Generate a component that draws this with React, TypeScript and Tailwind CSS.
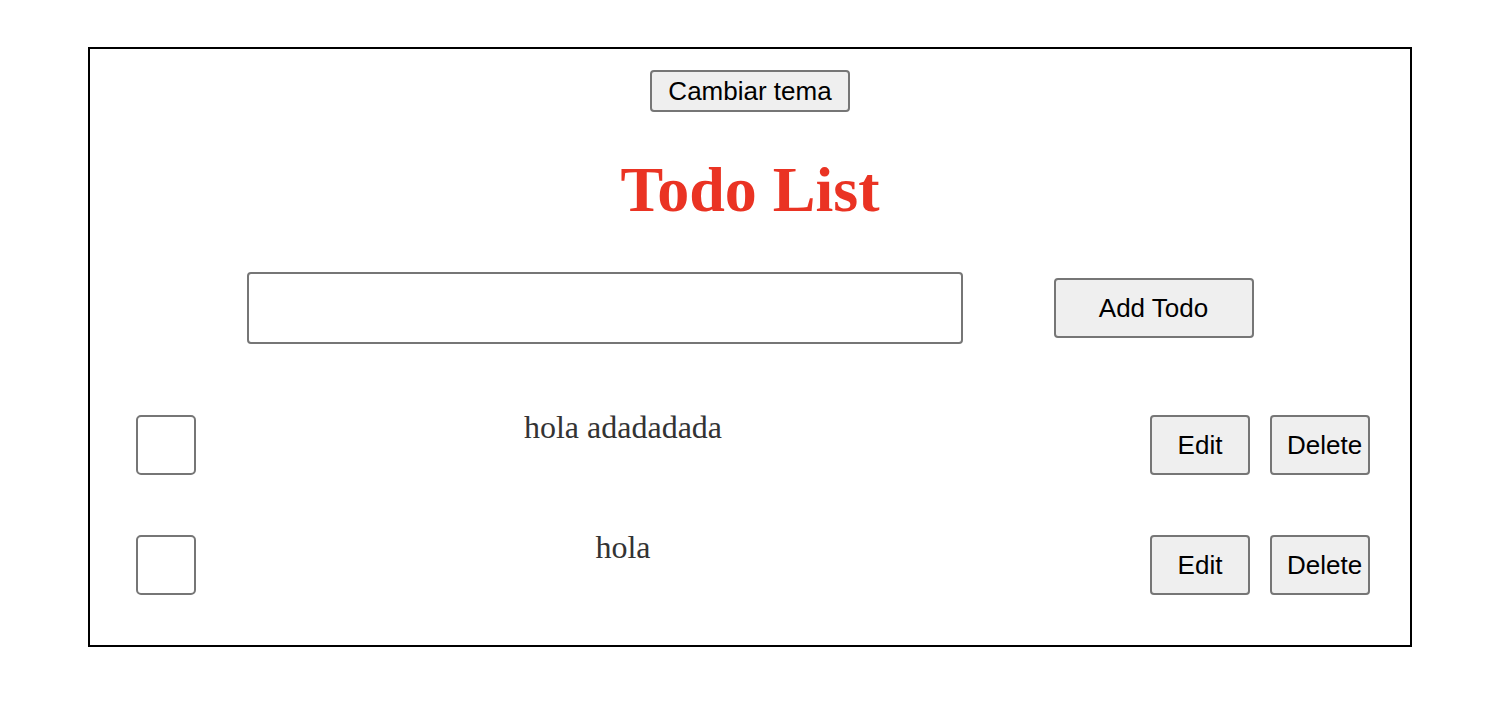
import React from "react";

const btn =
  "bg-[#efefef] border-2 border-[#767676] rounded-[4px] text-black text-[26px] leading-none font-['Liberation_Sans',Arial,sans-serif] flex items-center";

function Row({ text }: { text: string }) {
  return (
    <div className="flex items-start pl-[46px]">
      <div className="w-[60px] h-[60px] shrink-0 border-2 border-[#767676] rounded-[5px] bg-white" />
      <div className="w-[854px] shrink-0 text-center text-[32px] leading-[32px] text-[#333] mt-[-4px] font-['Liberation_Serif','Times_New_Roman',serif]">
        {text}
      </div>
      <button className={`${btn} justify-center pb-[1px] ml-[100px] w-[100px] h-[60px]`}>Edit</button>
      <button className={`${btn} justify-start pl-[15px] pb-[1px] ml-[20px] w-[100px] h-[60px]`}>Delete</button>
    </div>
  );
}

export default function App() {
  return (
    <div className="w-[1510px] h-[720px] bg-white pt-[47px]">
      <div className="ml-[88px] w-[1324px] h-[600px] border-2 border-black flex flex-col items-stretch pt-[21px]">
        <div className="flex justify-center">
          <button className={`${btn} justify-center w-[200px] h-[42px]`}>Cambiar tema</button>
        </div>
        <h1 className="mt-[46px] text-center text-[64px] leading-none font-bold text-[#ea3323] font-['Liberation_Serif','Times_New_Roman',serif]">
          Todo List
        </h1>
        <div className="mt-[50px] flex items-center justify-center">
          <input
            className="w-[716px] h-[72px] border-2 border-[#767676] rounded-[4px] bg-white outline-none"
            type="text"
          />
          <button className={`${btn} justify-center ml-[91px] w-[200px] h-[60px]`}>Add Todo</button>
        </div>
        <div className="mt-[71px] flex flex-col gap-[60px]">
          <Row text="hola adadadada" />
          <Row text="hola" />
        </div>
      </div>
    </div>
  );
}
